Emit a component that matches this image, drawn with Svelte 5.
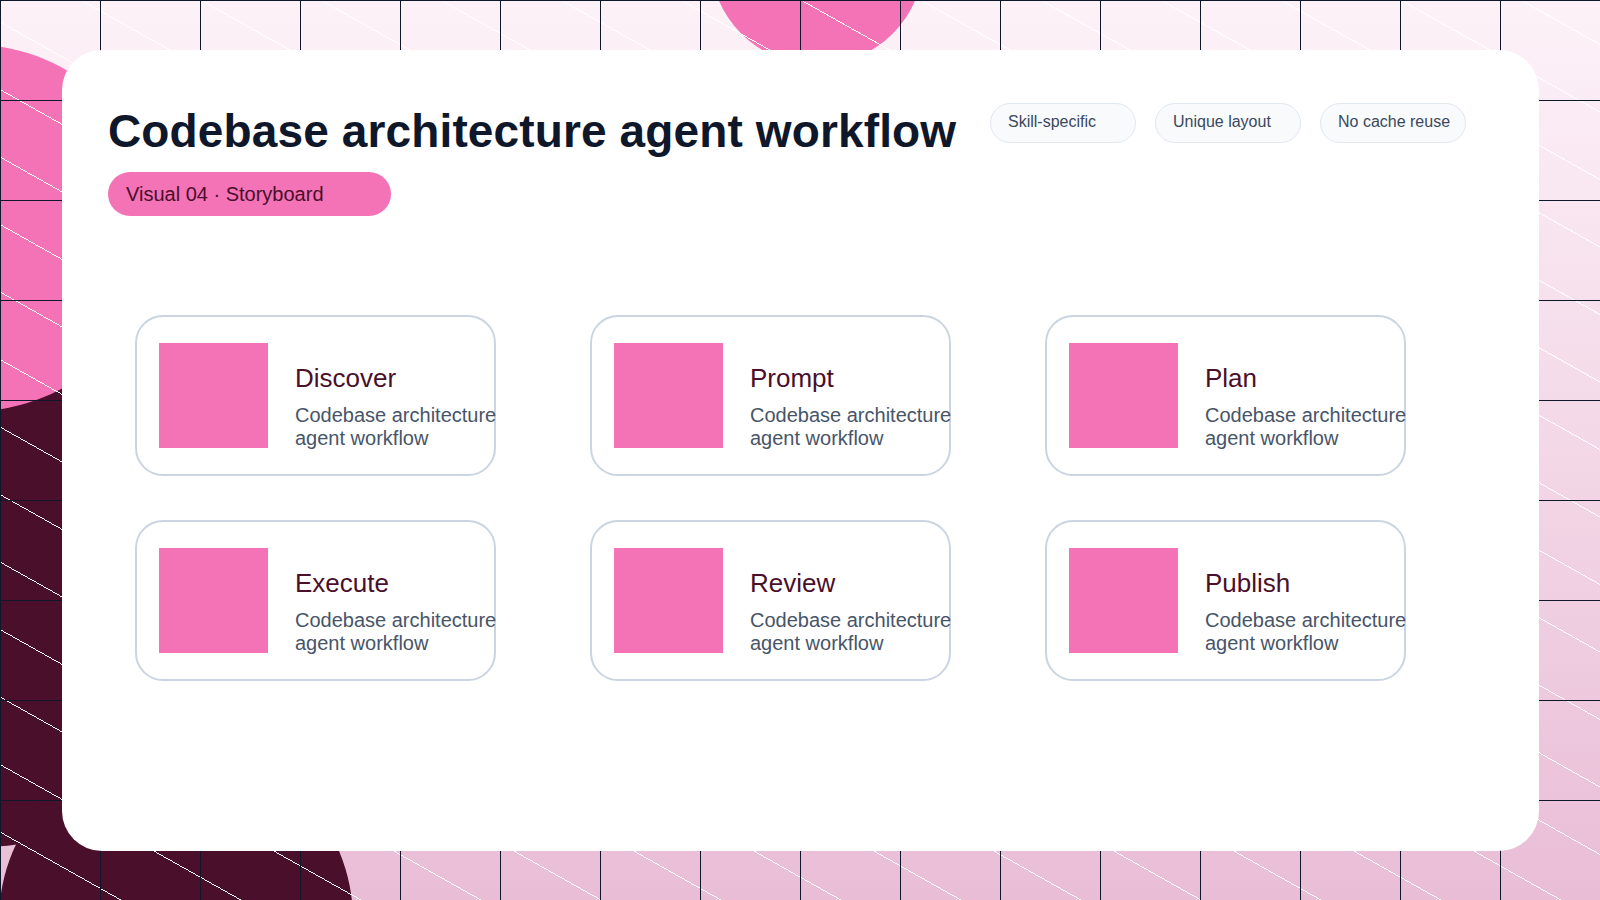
<script>
  const steps = ["Discover", "Prompt", "Plan", "Execute", "Review", "Publish"];
  const chips = ["Skill-specific", "Unique layout", "No cache reuse"];
</script>

<div class="scene">
  <div class="blob dark-top"></div>
  <div class="blob dark-bottom"></div>
  <div class="blob pink-left"></div>
  <div class="blob pink-top"></div>
  <div class="lines"></div>

  <main class="card">
    <header class="head">
      <div class="head-left">
        <h1>Codebase architecture agent workflow</h1>
        <div class="badge">Visual 04 · Storyboard</div>
      </div>
      <ul class="chips">
        {#each chips as chip}
          <li>{chip}</li>
        {/each}
      </ul>
    </header>

    <section class="steps">
      {#each steps as step}
        <article class="step">
          <div class="thumb"></div>
          <div class="copy">
            <h2>{step}</h2>
            <p>Codebase architecture<br />agent workflow</p>
          </div>
        </article>
      {/each}
    </section>
  </main>
</div>

<style>
  :global(body) {
    margin: 0;
  }

  .scene {
    position: relative;
    width: 1600px;
    height: 900px;
    overflow: hidden;
    box-sizing: border-box;
    padding: 50px 61px 49px 62px;
    background: linear-gradient(180deg, #fdf2f8 0%, #e9bdd6 100%);
    font-family: "Liberation Sans", Arial, sans-serif;
  }

  .blob {
    position: absolute;
    border-radius: 50%;
  }

  .dark-top {
    left: -300px;
    top: 287px;
    width: 560px;
    height: 560px;
    background: #4a0f2b;
  }

  .dark-bottom {
    left: -1px;
    top: 743px;
    width: 354px;
    height: 354px;
    background: #4a0f2b;
  }

  .pink-left {
    left: -209px;
    top: 45px;
    width: 366px;
    height: 366px;
    background: #f472b6;
  }

  .pink-top {
    left: 710px;
    top: -149px;
    width: 214px;
    height: 214px;
    background: #f472b6;
  }

  .lines {
    position: absolute;
    inset: 0;
    background-image:
      linear-gradient(#0f172a 1px, transparent 1px),
      linear-gradient(90deg, #0f172a 1px, transparent 1px),
      repeating-linear-gradient(to top right, #fff 0, #fff 0.9px, transparent 0.9px, transparent 58.83px);
    background-size: 100px 100px, 100px 100px, auto;
  }

  .card {
    position: relative;
    box-sizing: border-box;
    height: 801px;
    padding: 46px 46px 0;
    background: #fff;
    border-radius: 40px;
  }

  .head {
    display: flex;
    justify-content: space-between;
    align-items: flex-start;
  }

  h1 {
    margin: 0;
    font-size: 46px;
    letter-spacing: 0.13px;
    line-height: 64px;
    font-weight: 700;
    color: #0f172a;
    padding-top: 3px;
    height: 61px;
  }

  .badge {
    box-sizing: border-box;
    width: 283px;
    height: 44px;
    margin-top: 12px;
    padding-left: 18px;
    border-radius: 22px;
    background: #f472b6;
    color: #4a0f2b;
    font-size: 20px;
    line-height: 44px;
  }

  .chips {
    display: flex;
    gap: 19px;
    margin: 7px 27px 0 0;
    padding: 0;
    list-style: none;
  }

  .chips li {
    box-sizing: border-box;
    width: 146px;
    height: 40px;
    padding-left: 17px;
    border: 1px solid #e2e8f0;
    border-radius: 20px;
    background: #f8fafc;
    color: #3b485c;
    font-size: 16px;
    line-height: 36px;
    white-space: nowrap;
  }

  .steps {
    display: grid;
    grid-template-columns: repeat(3, 361px);
    grid-auto-rows: 161px;
    column-gap: 94px;
    row-gap: 44px;
    margin: 99px 0 0 27px;
  }

  .step {
    box-sizing: border-box;
    display: flex;
    align-items: center;
    gap: 27px;
    padding-left: 22px;
    border: 2px solid #cbd5e1;
    border-radius: 28px;
    background: #fff;
  }

  .thumb {
    flex: none;
    width: 109px;
    height: 105px;
    background: #f472b6;
  }

  .copy {
    padding-top: 21px;
    white-space: nowrap;
  }

  h2 {
    margin: 0 0 11px;
    font-size: 26px;
    line-height: 30px;
    font-weight: 400;
    color: #4a0f2b;
  }

  p {
    margin: 0;
    font-size: 20px;
    line-height: 23px;
    color: #475569;
  }
</style>
